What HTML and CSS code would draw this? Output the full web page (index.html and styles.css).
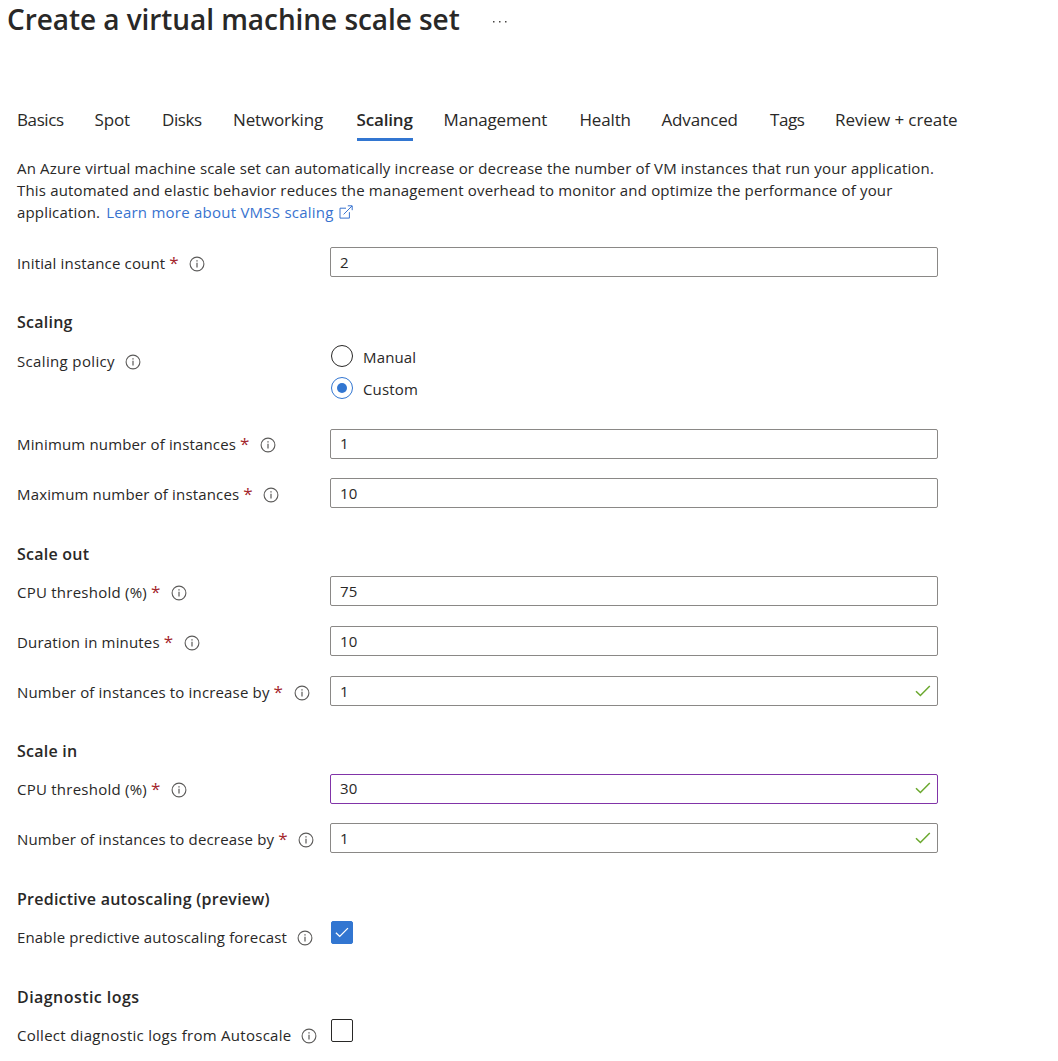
FILE: index.html
```html
<!DOCTYPE html>
<html lang="en">
<head>
<meta charset="utf-8">
<title>Create a virtual machine scale set</title>
<link rel="stylesheet" href="styles.css">
</head>
<body>
<svg class="defs" aria-hidden="true">
  <symbol id="info" viewBox="0 0 16 16">
    <circle cx="8" cy="8" r="6.9" fill="none" stroke="#5c5b5a" stroke-width="1.1"/>
    <path d="M8 6.8v4.7" stroke="#4a4948" stroke-width="1.1"/>
    <path d="M8 4.3v1.2" stroke="#4a4948" stroke-width="1.2"/>
  </symbol>
  <symbol id="check" viewBox="0 0 16 12">
    <path d="M1 6.2l4.4 4.3L14.8 1" fill="none" stroke="currentColor" stroke-width="1.5"/>
  </symbol>
</svg>

<header class="header">
  <h1 class="title">Create a virtual machine scale set</h1>
  <svg class="more" viewBox="0 0 14 4" role="img" aria-label="More"><path d="M0 1h1.5v1.5H0zM6 1h1.5v1.5H6zM12 1h1.5v1.5H12z"/></svg>
</header>

<nav class="tabs">
  <a class="tab tab-tight">Basics</a>
  <a class="tab">Spot</a>
  <a class="tab tab-tight">Disks</a>
  <a class="tab">Networking</a>
  <a class="tab tab-active">Scaling</a>
  <a class="tab">Management</a>
  <a class="tab">Health</a>
  <a class="tab">Advanced</a>
  <a class="tab tab-tight">Tags</a>
  <a class="tab tab-loose">Review + create</a>
</nav>

<main class="form">
  <p class="intro">An Azure virtual machine scale set can automatically increase or decrease the number of VM instances that run your application.<br>This automated and elastic behavior reduces the management overhead to monitor and optimize the performance of your<br>application. <a class="link">Learn more about VMSS scaling<svg class="external" viewBox="0 0 14 14"><path d="M7 3.2H1v9.9h9.4V7.2M4.6 9.4L13 1M8.8.8h4.4v4.4" fill="none" stroke="currentColor" stroke-width="1"/></svg></a></p>

  <section class="group group-first">
    <div class="row"><div class="label"><span>Initial instance count</span><span class="req">*</span><svg class="info"><use href="#info"/></svg></div><div class="field">2</div></div>
  </section>

  <section class="group group-policy">
    <h2 class="heading">Scaling</h2>
    <div class="row">
      <div class="label label-policy"><span>Scaling policy</span><svg class="info"><use href="#info"/></svg></div>
      <div class="radios">
        <div class="radio"><span class="dot"></span><span class="radio-text">Manual</span></div>
        <div class="radio"><span class="dot dot-on"></span><span class="radio-text">Custom</span></div>
      </div>
    </div>
  </section>

  <section class="group group-limits">
    <div class="row"><div class="label label-high"><span>Minimum number of instances</span><span class="req">*</span><svg class="info"><use href="#info"/></svg></div><div class="field field-high">1</div></div>
    <div class="row"><div class="label"><span>Maximum number of instances</span><span class="req">*</span><svg class="info"><use href="#info"/></svg></div><div class="field">10</div></div>
  </section>

  <section class="group group-out">
    <h2 class="heading">Scale out</h2>
    <div class="row"><div class="label label-cpu"><span>CPU threshold (%)</span><span class="req">*</span><svg class="info"><use href="#info"/></svg></div><div class="field">75</div></div>
    <div class="row"><div class="label"><span>Duration in minutes</span><span class="req">*</span><svg class="info"><use href="#info"/></svg></div><div class="field">10</div></div>
    <div class="row"><div class="label"><span>Number of instances to increase by</span><span class="req">*</span><svg class="info"><use href="#info"/></svg></div><div class="field">1<svg class="valid"><use href="#check"/></svg></div></div>
  </section>

  <section class="group group-in">
    <h2 class="heading">Scale in</h2>
    <div class="row"><div class="label label-cpu label-high"><span>CPU threshold (%)</span><span class="req">*</span><svg class="info"><use href="#info"/></svg></div><div class="field field-high field-changed">30<svg class="valid"><use href="#check"/></svg></div></div>
    <div class="row"><div class="label"><span>Number of instances to decrease by</span><span class="req">*</span><svg class="info"><use href="#info"/></svg></div><div class="field">1<svg class="valid"><use href="#check"/></svg></div></div>
  </section>

  <section class="group group-check">
    <h2 class="heading">Predictive autoscaling (preview)</h2>
    <div class="row"><div class="label"><span>Enable predictive autoscaling forecast</span><svg class="info"><use href="#info"/></svg></div><div class="box box-on"><svg class="tick"><use href="#check"/></svg></div></div>
  </section>

  <section class="group group-check">
    <h2 class="heading heading-loose">Diagnostic logs</h2>
    <div class="row"><div class="label label-loose"><span>Collect diagnostic logs from Autoscale</span><svg class="info"><use href="#info"/></svg></div><div class="box"></div></div>
  </section>
</main>
</body>
</html>
```
FILE: styles.css
```css
* { box-sizing: border-box; }

body {
  margin: 0;
  background: #fff;
  color: #292827;
  font: 15px/22px "Open Sans", "Noto Sans", sans-serif;
  letter-spacing: 0.16px;
}

.defs { position: absolute; width: 0; height: 0; }

.header {
  display: flex;
  align-items: center;
  height: 40px;
  padding-left: 7px;
}

.title {
  margin: 0 0 2px;
  font-size: 28px;
  line-height: 38px;
  font-weight: 600;
  letter-spacing: -0.06px;
}

.more { width: 14px; height: 4px; margin: 3px 0 0 33px; fill: #484644; }

.tabs {
  display: grid;
  grid-template-columns: 77.5px 67.5px 71px 123.5px 87px 136px 82px 108.5px 65px 125px;
  margin-top: 66px;
  padding-left: 17px;
  font-size: 17px;
  line-height: 28px;
  letter-spacing: -0.16px;
}

.tab { height: 35px; justify-self: start; white-space: nowrap; }
.tab-tight { letter-spacing: -0.4px; }
.tab-loose { letter-spacing: -0.08px; }

.tab-active {
  font-weight: 600;
  border-bottom: 3px solid #3276d1;
}

.form { padding-left: 17px; }

.intro { margin: 16px 0 0; white-space: nowrap; letter-spacing: 0.17px; }

.link { margin-left: 2px; color: #3873cf; letter-spacing: 0.24px; }

.external { width: 14px; height: 14px; margin-left: 5px; vertical-align: -1px; }

.group { display: flex; flex-direction: column; gap: 20px; }
.group-first { margin-top: 24px; }
.group-policy { margin-top: 34px; }
.group-limits { margin-top: 30px; gap: 19px; }
.group-out { margin-top: 35px; }
.group-in { margin-top: 34px; gap: 19px; }
.group-check { margin-top: 35px; }
.group-check + .group-check { margin-top: 38px; }

.heading {
  margin: 0 0 -9px;
  font-size: 16px;
  line-height: 22px;
  font-weight: 600;
  letter-spacing: 0.24px;
}
.heading-loose { letter-spacing: 0.44px; }
.group-policy .heading { margin-bottom: -8px; }
.group-in .heading { margin-bottom: -7px; }

.row {
  display: grid;
  grid-template-columns: 313px 608px;
  align-items: start;
}

.label {
  display: flex;
  align-items: center;
  height: 22px;
  margin-top: 5px;
  white-space: nowrap;
}
.label-high { margin-top: 4px; }
.label-policy { letter-spacing: 0.35px; }
.label-cpu { letter-spacing: 0.24px; }
.label-loose { letter-spacing: 0.28px; }

.req {
  margin-left: 4px;
  width: 8px;
  color: #a4262c;
  font-size: 17px;
}

.info { width: 16px; height: 16px; margin: 1px 0 0 10px; }
.req + .info { margin-left: 12px; }

.field {
  display: flex;
  align-items: center;
  justify-content: space-between;
  height: 30px;
  padding: 0 6px 0 9px;
  border: 1px solid #8a8886;
  border-radius: 2px;
}
.field-high { padding-bottom: 2px; }
.field-changed { border-color: #8134a8; }

.valid { width: 16px; height: 12px; color: #6aa82e; }

.radios { display: flex; flex-direction: column; gap: 10px; padding-left: 1px; }

.radio { display: flex; align-items: center; height: 22px; gap: 10px; }
.radio-text { padding-top: 2px; }

.dot {
  display: flex;
  align-items: center;
  justify-content: center;
  width: 22px;
  height: 22px;
  border: 1px solid #292827;
  border-radius: 50%;
}
.dot-on { border-color: #3276d1; }
.dot-on::before {
  content: "";
  width: 10px;
  height: 10px;
  border-radius: 50%;
  background: #3276d1;
}

.box {
  display: flex;
  align-items: center;
  justify-content: center;
  width: 22px;
  height: 23px;
  margin-left: 1px;
  border: 1px solid #292827;
  border-radius: 2px;
}
.box-on { border-color: #3276d1; background: #3276d1; color: #fff; }
.tick { width: 14px; height: 11px; }
```
